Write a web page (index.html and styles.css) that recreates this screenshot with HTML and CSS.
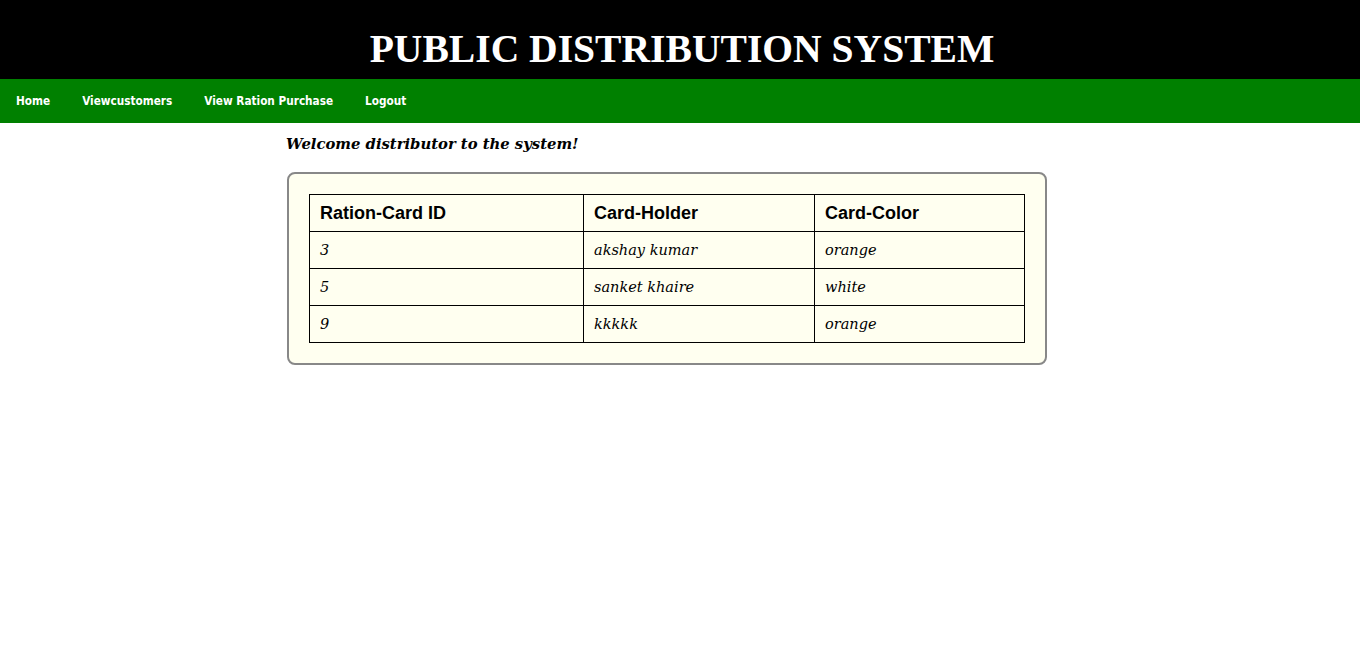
FILE: index.html
```html
<!DOCTYPE html>
<html>
<head>
<meta charset="utf-8">
<title>Public Distribution System</title>
<link rel="stylesheet" href="styles.css">
</head>
<body>
<header class="banner">
  <h1 class="title">PUBLIC DISTRIBUTION SYSTEM</h1>
</header>
<nav class="nav">
  <a class="nav-link" href="#">Home</a>
  <a class="nav-link" href="#">Viewcustomers</a>
  <a class="nav-link" href="#">View Ration Purchase</a>
  <a class="nav-link" href="#">Logout</a>
</nav>
<main class="content">
  <p class="welcome">Welcome distributor to the system!</p>
  <div class="panel">
    <table class="grid">
      <thead>
        <tr><th class="c1">Ration-Card ID</th><th class="c2">Card-Holder</th><th class="c3">Card-Color</th></tr>
      </thead>
      <tbody>
        <tr><td>3</td><td>akshay kumar</td><td>orange</td></tr>
        <tr><td>5</td><td>sanket khaire</td><td>white</td></tr>
        <tr><td>9</td><td>kkkkk</td><td>orange</td></tr>
      </tbody>
    </table>
  </div>
</main>
</body>
</html>
```
FILE: styles.css
```css
html, body {
  margin: 0;
  padding: 0;
  background: #ffffff;
}
.banner {
  background: #000000;
  height: 79px;
  display: flex;
  align-items: flex-end;
  justify-content: center;
  padding-left: 4px;
}
.title {
  margin: 0 0 8px 0;
  color: #ffffff;
  font-family: "Liberation Serif", "Times New Roman", serif;
  font-weight: bold;
  font-size: 39.6px;
  line-height: 44px;
}
.nav {
  background: #008000;
  height: 44px;
  display: flex;
  align-items: center;
  padding-left: 16px;
}
.nav-link {
  color: #ffffff;
  text-decoration: none;
  font-family: "DejaVu Sans Condensed", "DejaVu Sans", Tahoma, sans-serif;
  font-size: 11.7px;
  font-weight: bold;
  margin-right: 32px;
}
.content {
  width: 788px;
  margin: 0 auto;
  padding-top: 11px;
}
.welcome {
  margin: 0 0 18px 0;
  font-family: "DejaVu Serif", Georgia, serif;
  font-style: italic;
  font-weight: bold;
  font-size: 14.8px;
  line-height: 20px;
}
.panel {
  width: 716px;
  margin-left: 1px;
  padding: 20px;
  background: #fffff0;
  border: 2px solid #888888;
  border-radius: 8px;
}
.grid {
  width: 716px;
  border-collapse: collapse;
}
.grid th, .grid td {
  border: 1px solid #000000;
  text-align: left;
  padding: 0 10px;
  height: 36px;
}
.grid th {
  font-family: "Liberation Sans", Arial, sans-serif;
  font-weight: bold;
  font-size: 18px;
}
.grid td {
  font-family: "DejaVu Serif", Georgia, serif;
  font-style: italic;
  font-size: 14.5px;
}
.c1 { width: 253px; }
.c2 { width: 210px; }
```
